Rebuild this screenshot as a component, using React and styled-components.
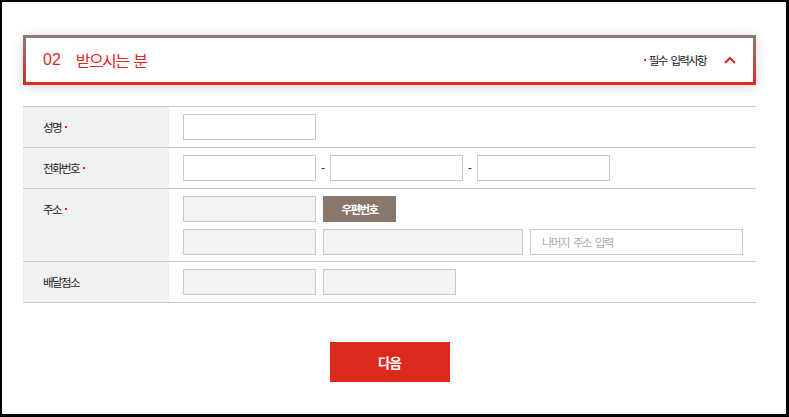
import React from "react";
import styled, { createGlobalStyle } from "styled-components";

const GlobalStyle = createGlobalStyle`
  html, body { margin: 0; padding: 0; background: #fff; }
  body { font-family: "Noto Sans CJK KR", "Noto Sans", sans-serif; color: #333; }
  * { box-sizing: border-box; }
`;

const Frame = styled.div`
  width: 789px;
  height: 417px;
  border-style: solid;
  border-color: #000;
  border-width: 2px 3px 3px 2px;
  background: #fff;
  overflow: hidden;
`;

const Content = styled.div`
  padding: 33px 30px 0 21px;
`;

const SectionHeader = styled.div`
  height: 50px;
  display: flex;
  align-items: center;
  justify-content: space-between;
  padding: 0 17px 0 17px;
  border: 3px solid transparent;
  border-image: linear-gradient(to bottom, #8b7b70, #de2a1f) 1;
  box-shadow: 0 2px 12px rgba(0, 0, 0, 0.16);
  background: #fff;
`;

const Title = styled.h2`
  margin: 0;
  display: flex;
  align-items: center;
  font-size: 16px;
  font-weight: 400;
  color: #e0281e;
  letter-spacing: -1.6px;
  word-spacing: 3px;
  white-space: pre;
`;

const Num = styled.span`
  font-family: "Liberation Sans", sans-serif;
  letter-spacing: 0;
  margin-right: 15px;
`;

const HeaderRight = styled.div`
  display: flex;
  align-items: center;
  gap: 18px;
`;

const RedDot = styled.i`
  display: inline-block;
  flex: none;
  width: 2px;
  height: 2px;
  background: #e0281e;
  margin: ${(p) => (p.$before ? "0 3px 0 0" : "0 0 0 4px")};
`;

const Required = styled.span`
  display: inline-flex;
  align-items: center;
  font-size: 11.5px;
  letter-spacing: -1.7px;
  word-spacing: 3px;
  white-space: pre;
  color: #222;
`;

const Table = styled.div`
  margin-top: 21px;
  border-top: 1px solid #c9c9c9;
`;

const Row = styled.div`
  display: grid;
  grid-template-columns: 146px 1fr;
  border-bottom: 1px solid #c9c9c9;
`;

const Label = styled.div`
  background: #f1f1f1;
  padding-left: 20px;
  font-size: 11.5px;
  letter-spacing: -1.6px;
  color: #222;
  display: flex;
  align-items: flex-start;
`;

const LabelText = styled.span`
  display: inline-flex;
  align-items: center;
  height: 40px;
`;

const Cell = styled.div`
  padding: 7px 14px ${(p) => (p.$first ? 7 : 6)}px;
  display: flex;
  flex-direction: column;
  gap: 7px;
`;

const Line = styled.div`
  display: flex;
  align-items: center;
  gap: 7px;
`;

const Input = styled.input`
  width: ${(p) => p.$w || 133}px;
  height: 26px;
  border: 1px solid #c9c9c9;
  background: ${(p) => (p.disabled ? "#f3f3f3" : "#fff")};
  margin: 0;
  padding: 0 11px;
  font-family: "Noto Sans CJK KR", "Noto Sans", sans-serif;
  font-size: 11.5px;
  letter-spacing: -1.6px;
  word-spacing: 3px;
  outline: none;
  &::placeholder { color: #aaa; }
`;

const Dash = styled.span`
  width: 14px;
  margin: 0 -7px;
  text-align: center;
  font-family: "Liberation Sans", sans-serif;
  font-size: 12px;
  color: #333;
`;

const PostButton = styled.button`
  width: 73px;
  height: 26px;
  border: 0;
  margin: 0;
  padding: 0;
  background: #8a776b;
  color: #fff;
  font-family: "Noto Sans CJK KR", "Noto Sans", sans-serif;
  font-size: 11.5px;
  font-weight: 700;
  letter-spacing: -1.6px;
`;

const Actions = styled.div`
  display: flex;
  justify-content: center;
  margin-top: 39px;
`;

const NextButton = styled.button`
  width: 120px;
  height: 40px;
  border: 0;
  margin: 0;
  background: #dc291e;
  color: #fff;
  font-family: "Noto Sans CJK KR", "Noto Sans", sans-serif;
  font-size: 13.5px;
  font-weight: 700;
  letter-spacing: -1px;
`;

const Chevron = () => (
  <svg width="12" height="8" viewBox="0 0 12 8" aria-hidden="true">
    <path d="M1 7 L6 2 L11 7" fill="none" stroke="#e0281e" strokeWidth="2" />
  </svg>
);

const FieldLabel = ({ children, required }) => (
  <Label>
    <LabelText>
      {children}
      {required && <RedDot />}
    </LabelText>
  </Label>
);

export default function App() {
  return (
    <>
      <GlobalStyle />
      <Frame>
        <Content>
          <SectionHeader>
            <Title>
              <Num>02</Num>받으시는 분
            </Title>
            <HeaderRight>
              <Required>
                <RedDot $before />
                필수 입력사항
              </Required>
              <Chevron />
            </HeaderRight>
          </SectionHeader>

          <Table>
            <Row>
              <FieldLabel required>성명</FieldLabel>
              <Cell $first>
                <Line>
                  <Input />
                </Line>
              </Cell>
            </Row>
            <Row>
              <FieldLabel required>전화번호</FieldLabel>
              <Cell>
                <Line>
                  <Input />
                  <Dash>-</Dash>
                  <Input />
                  <Dash>-</Dash>
                  <Input />
                </Line>
              </Cell>
            </Row>
            <Row>
              <FieldLabel required>주소</FieldLabel>
              <Cell>
                <Line>
                  <Input disabled />
                  <PostButton>우편번호</PostButton>
                </Line>
                <Line>
                  <Input disabled />
                  <Input disabled $w={200} />
                  <Input $w={213} placeholder="나머지 주소 입력" />
                </Line>
              </Cell>
            </Row>
            <Row>
              <FieldLabel>배달점소</FieldLabel>
              <Cell>
                <Line>
                  <Input disabled />
                  <Input disabled />
                </Line>
              </Cell>
            </Row>
          </Table>

          <Actions>
            <NextButton>다음</NextButton>
          </Actions>
        </Content>
      </Frame>
    </>
  );
}
